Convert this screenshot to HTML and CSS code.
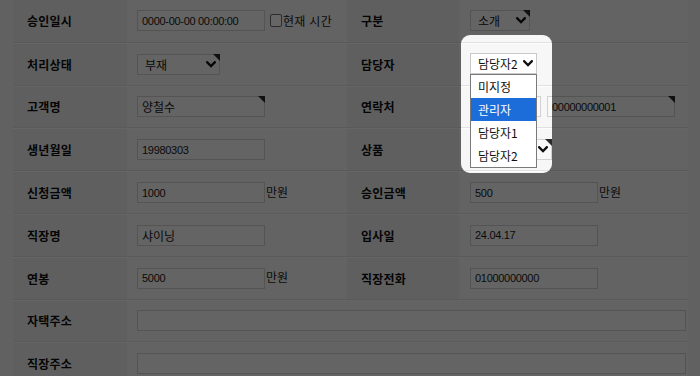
FILE: index.html
```html
<!DOCTYPE html>
<html lang="ko">
<head>
<meta charset="utf-8">
<link rel="stylesheet" href="styles.css">
</head>
<body>
<div class="page">
  <div class="form">
    <div class="row">
      <div class="lab">승인일시</div>
      <div class="val"><span class="inp">0000-00-00 00:00:00</span><span class="chk"></span><span class="txt">현재 시간</span></div>
      <div class="lab">구분</div>
      <div class="val v2"><span class="sel mk w60"><span class="st">소개</span><svg class="chev" viewBox="0 0 10 7"><polyline points="1.2,1.2 5,5 8.8,1.2"/></svg></span></div>
    </div>
    <div class="row">
      <div class="lab">처리상태</div>
      <div class="val"><span class="sel mk w83"><span class="st">부재</span><svg class="chev" viewBox="0 0 10 7"><polyline points="1.2,1.2 5,5 8.8,1.2"/></svg></span></div>
      <div class="lab">담당자</div>
      <div class="val v2">
        <span class="dd">
          <span class="sel open w67"><span class="st">담당자2</span><svg class="chev" viewBox="0 0 10 7"><polyline points="1.2,1.2 5,5 8.8,1.2"/></svg></span>
          <span class="list">
            <span class="opt">미지정</span>
            <span class="opt on">관리자</span>
            <span class="opt">담당자1</span>
            <span class="opt">담당자2</span>
          </span>
        </span>
      </div>
    </div>
    <div class="row">
      <div class="lab">고객명</div>
      <div class="val"><span class="inp mk"><span class="ko">양철수</span></span></div>
      <div class="lab">연락처</div>
      <div class="val v2"><span class="sel w71"><span class="st"></span><svg class="chev" viewBox="0 0 10 7"><polyline points="1.2,1.2 5,5 8.8,1.2"/></svg></span><span class="inp mk gap6">00000000001</span></div>
    </div>
    <div class="row">
      <div class="lab">생년월일</div>
      <div class="val"><span class="inp">19980303</span></div>
      <div class="lab">상품</div>
      <div class="val v2"><span class="sel mk w82"><span class="st"></span><svg class="chev" viewBox="0 0 10 7"><polyline points="1.2,1.2 5,5 8.8,1.2"/></svg></span></div>
    </div>
    <div class="row">
      <div class="lab">신청금액</div>
      <div class="val"><span class="inp">1000</span><span class="unit">만원</span></div>
      <div class="lab">승인금액</div>
      <div class="val v2"><span class="inp">500</span><span class="unit">만원</span></div>
    </div>
    <div class="row">
      <div class="lab">직장명</div>
      <div class="val"><span class="inp"><span class="ko">샤이닝</span></span></div>
      <div class="lab">입사일</div>
      <div class="val v2"><span class="inp">24.04.17</span></div>
    </div>
    <div class="row">
      <div class="lab">연봉</div>
      <div class="val"><span class="inp">5000</span><span class="unit">만원</span></div>
      <div class="lab">직장전화</div>
      <div class="val v2"><span class="inp">01000000000</span></div>
    </div>
    <div class="row">
      <div class="lab">자택주소</div>
      <div class="val wide"><span class="inp full"></span></div>
    </div>
    <div class="row">
      <div class="lab">직장주소</div>
      <div class="val wide"><span class="inp full"></span></div>
    </div>
  </div>
  <div class="spot"></div>
</div>
</body>
</html>
```
FILE: styles.css
```css
html, body {
  margin: 0;
  padding: 0;
}
body {
  width: 700px;
  height: 376px;
  overflow: hidden;
  background: #f3f3f3;
  font-family: "Liberation Sans", "Noto Sans CJK KR", sans-serif;
  color: #1e1e1e;
}
.page {
  position: relative;
  padding: 0 12px 0 13px;
  height: 376px;
}
.form {
  display: flex;
  flex-direction: column;
}
.row {
  display: grid;
  grid-template-columns: 114px 220px 112px 229px;
  height: 42.8px;
  box-sizing: border-box;
  border-top: 1px solid #fdfdfd;
  border-bottom: 1px solid #e1e1e1;
}
.row:first-child {
  border-top: 0;
}
.lab {
  background: #ededed;
  display: flex;
  align-items: center;
  padding-left: 14px;
  font-family: "Noto Sans CJK KR", sans-serif;
  font-weight: bold;
  font-size: 12px;
  letter-spacing: 0.2px;
  color: #0e0e0e;
}
.val {
  background: #f7f7f7;
  display: flex;
  align-items: center;
  padding-left: 10px;
}
.v2 {
  padding-left: 11px;
}
.wide {
  grid-column: span 3;
  padding-right: 2px;
}
.inp, .sel {
  position: relative;
  box-sizing: border-box;
  height: 21px;
  width: 128px;
  border: 1px solid #d2d2d2;
  background: #f9f9f9;
  display: flex;
  align-items: center;
  padding-left: 4px;
  font-size: 11px;
  letter-spacing: -0.3px;
  color: #1a1a1a;
  flex: none;
}
.ko {
  font-family: "Noto Sans CJK KR", sans-serif;
  font-size: 12px;
  letter-spacing: 0;
}
.full {
  width: 100%;
}
.gap6 {
  margin-left: 6px;
}
.sel {
  justify-content: space-between;
  padding-left: 7px;
  padding-right: 3px;
  font-size: 12px;
  letter-spacing: 0;
  font-family: "Noto Sans CJK KR", sans-serif;
}
.w60 { width: 60px; }
.w67 { width: 67px; }
.w71 { width: 71px; }
.w82 { width: 82px; }
.w83 { width: 83px; }
.chev {
  width: 10px;
  height: 7px;
  flex: none;
}
.chev polyline {
  fill: none;
  stroke: #111;
  stroke-width: 2.3;
  stroke-linecap: square;
}
.mk::after {
  content: "";
  position: absolute;
  top: -1px;
  right: -1px;
  border-style: solid;
  border-width: 0 7px 7px 0;
  border-color: transparent #2a2a2a transparent transparent;
}
.chk {
  box-sizing: border-box;
  width: 12px;
  height: 13px;
  margin-left: 5px;
  border: 1px solid #6f6f6f;
  border-radius: 2px;
  background: #fff;
}
.txt {
  font-family: "Noto Sans CJK KR", sans-serif;
  font-size: 12px;
  margin-left: 1px;
  letter-spacing: 0.3px;
}
.unit {
  font-family: "Noto Sans CJK KR", sans-serif;
  font-size: 12px;
  margin-left: 1px;
  margin-top: -3px;
}
.dd {
  position: relative;
  display: flex;
  margin-top: -2px;
}
.sel.open {
  background: #fff;
  border-color: #c9c9c9;
  color: #111;
}
.list {
  position: absolute;
  z-index: 5;
  top: 21px;
  left: 0;
  width: 67px;
  box-sizing: border-box;
  border: 1px solid #7a7a7a;
  background: #fff;
  display: flex;
  flex-direction: column;
  font-family: "Noto Sans CJK KR", sans-serif;
  font-size: 12px;
  color: #111;
}
.opt {
  height: 23px;
  display: flex;
  align-items: center;
  padding-left: 7px;
}
.opt.on {
  background: #1c6cda;
  color: #fff;
}
.spot {
  position: absolute;
  z-index: 10;
  left: 461px;
  top: 35px;
  width: 91px;
  height: 138px;
  border-radius: 9px;
  box-shadow: 0 0 0 2000px rgba(0, 0, 0, 0.6);
  pointer-events: none;
}
```
